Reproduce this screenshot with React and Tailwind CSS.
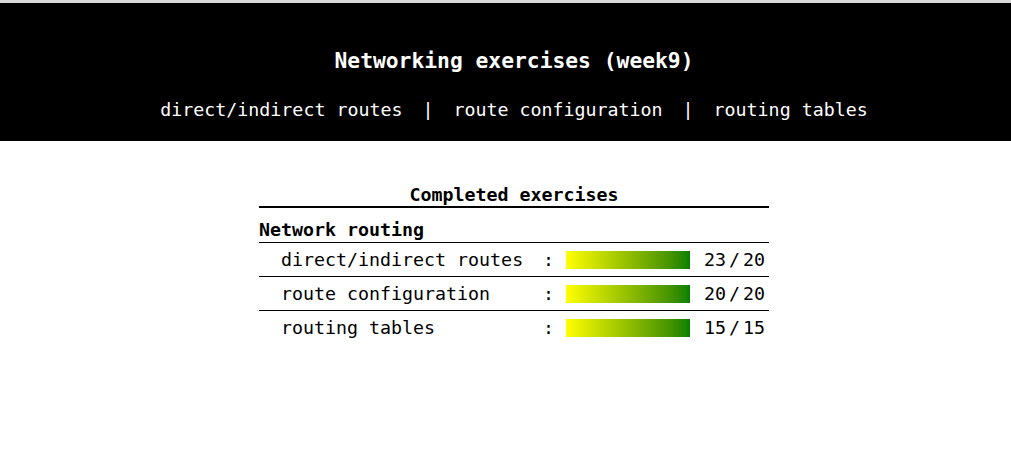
import React from 'react';

const rows = [
    { name: 'direct/indirect routes', done: 23, total: 20 },
    { name: 'route configuration', done: 20, total: 20 },
    { name: 'routing tables', done: 15, total: 15 },
];

const mono = { fontFamily: '"DejaVu Sans Mono", "Liberation Mono", monospace' };

export default function App() {
    return (
        <div className="min-h-[450px] bg-white text-black border-t-[3px] border-[#d9d9d9]" style={mono}>
            {/* header */}
            <div className="bg-black text-white h-[138px] flex flex-col items-center pl-[17px]">
                <h1 className="mt-[45px] text-[21.3px] leading-[26px] font-bold">Networking exercises (week9)</h1>
                <nav className="mt-[25px] flex items-center text-[18.3px] leading-[22px]">
                    <a>direct/indirect routes</a>
                    <span className="mx-[20px]">|</span>
                    <a>route configuration</a>
                    <span className="mx-[20px]">|</span>
                    <a>routing tables</a>
                </nav>
            </div>

            {/* progress table */}
            <div className="flex justify-center pl-[17px]">
                <div className="w-[510px] mt-[43px] text-[18.3px]">
                    <div className="h-[24px] flex items-center justify-center font-bold border-b-2 border-black">
                        Completed exercises
                    </div>
                    <div className="h-[35px] pt-[9px] flex items-center font-bold border-b border-black">
                        Network routing
                    </div>
                    {rows.map((r, i) => (
                        <div
                            key={r.name}
                            className={`h-[34px] flex items-center ${i < rows.length - 1 ? 'border-b border-black' : ''}`}
                        >
                            <span className="ml-[22px] w-[262px] whitespace-pre">{r.name}</span>
                            <span className="w-[11px] text-center">:</span>
                            <div className="ml-[12px] w-[124px] h-[18px] bg-gradient-to-r from-[#ffff00] to-[#008000]"></div>
                            <div className="flex-1 flex justify-end items-center pr-[4px]">
                                <span className="w-[22px] text-right">{r.done}</span>
                                <span className="ml-[3px] w-[11px] text-center">/</span>
                                <span className="ml-[3px] w-[22px]">{r.total}</span>
                            </div>
                        </div>
                    ))}
                </div>
            </div>
        </div>
    );
}
